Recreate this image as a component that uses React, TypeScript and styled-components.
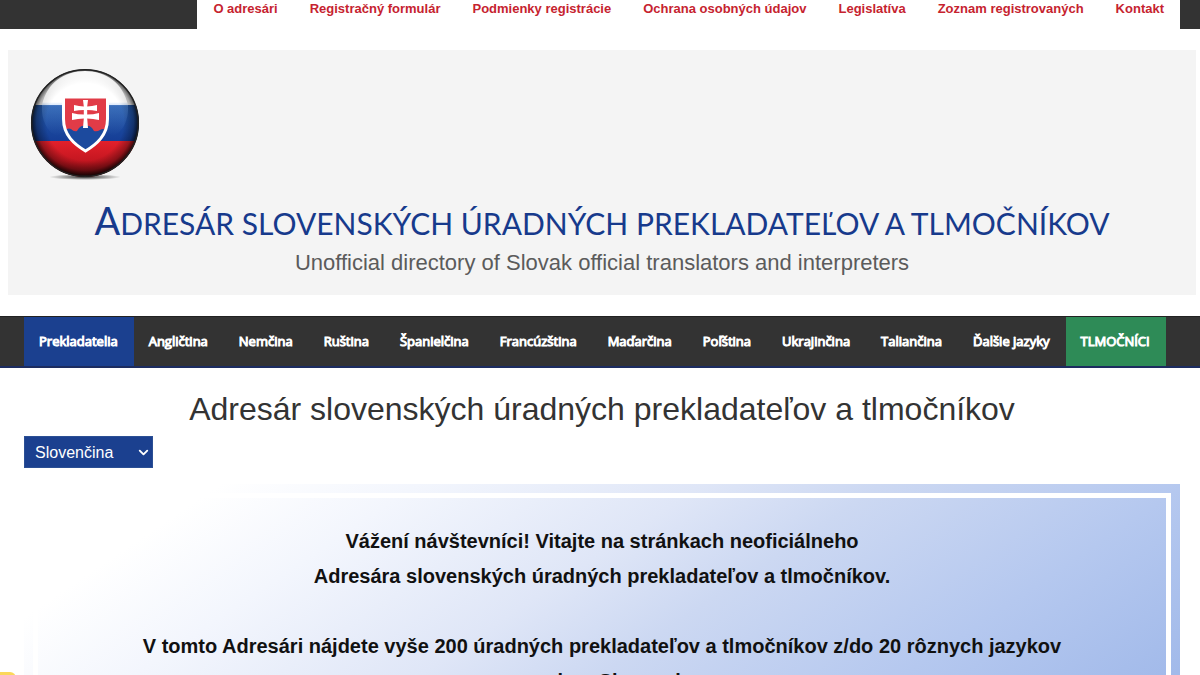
import React from "react";
import styled, { createGlobalStyle } from "styled-components";
import { ChevronDown } from "lucide-react";

const sans = `"Liberation Sans", Arial, sans-serif`;

const GlobalStyle = createGlobalStyle`
  * { box-sizing: border-box; }
  body { margin: 0; background: #fff; font-family: ${sans}; color: #333; }
  h1, h2, p { margin: 0; font-weight: normal; }
`;

const Page = styled.div`
  height: 100vh;
  overflow: hidden;
  display: flex;
  flex-direction: column;
`;

const TopBar = styled.div`
  flex: none;
  display: flex;
  justify-content: flex-end;
  height: 29px;
  padding-right: 20px;
  background: #333;
`;

const TopNav = styled.nav`
  display: flex;
  background: #fff;
`;

const TopLink = styled.a`
  padding: 1px 16px 0;
  font-size: 13px;
  line-height: 16px;
  font-weight: bold;
  color: #c6232f;
  text-decoration: none;
  white-space: nowrap;
`;

const Banner = styled.header`
  flex: none;
  margin: 21px 4px 0 8px;
  padding: 15px 20px 15px;
  background: #f4f4f4;
  text-align: center;
`;

const LogoLink = styled.a`
  display: block;
  width: 114px;
  height: 116px;
  svg { display: block; }
`;

const SiteTitle = styled.p`
  margin-top: 17px;
  font-family: Lato, ${sans};
  font-size: 30px;
  line-height: 44px;
  text-transform: uppercase;
  color: #173a8c;
  &::first-letter { font-size: 38px; }
`;

const Tagline = styled.p`
  margin-top: 1px;
  font-size: 22px;
  line-height: 34px;
  color: #5b5b5b;
`;

const MainNav = styled.nav`
  flex: none;
  display: flex;
  margin-top: 21px;
  padding: 0 24px;
  background: #333;
  border-top: 1px solid #222;
  border-bottom: 2px solid #1c2c60;
`;

const NavLink = styled.a<{ $fill?: string }>`
  padding: 0 16px 0 15px;
  font-family: "Open Sans", ${sans};
  font-size: 13px;
  line-height: 49px;
  -webkit-text-stroke: 1px #fff;
  color: #fff;
  background: ${(p) => p.$fill ?? "transparent"};
  text-decoration: none;
  white-space: nowrap;
`;

const Main = styled.main`
  flex: 1;
  min-height: 0;
  display: flex;
  flex-direction: column;
  padding: 22px 20px 0 24px;
`;

const Heading = styled.h1`
  font-size: 32px;
  line-height: 38px;
  text-align: center;
`;

const SelectBox = styled.div`
  position: relative;
  align-self: flex-start;
  margin-top: 8px;
  svg {
    position: absolute;
    right: 2px;
    top: 9px;
    pointer-events: none;
  }
`;

const LanguageSelect = styled.select`
  appearance: none;
  display: block;
  width: 129px;
  height: 32px;
  padding: 0 10px;
  border: 1px solid #2b4f94;
  border-radius: 0;
  background: #1b408f;
  color: #fff;
  font-family: ${sans};
  font-size: 16px;
`;

const Panel = styled.section`
  flex: 1;
  min-height: 0;
  display: flex;
  margin-top: 16px;
  padding: 9px 9px 0;
  background: linear-gradient(146deg, #fff 110px, #f3f6fd 220px, #dfe6f7 380px, #ccd8f2 480px, #b5c8ef 650px, #a2baea 800px);
`;

const PanelFrame = styled.div`
  flex: 1;
  border: 5px solid #fff;
  border-bottom: 0;
  padding: 26px 20px 0;
`;

const Intro = styled.p`
  font-size: 20px;
  line-height: 35px;
  font-weight: bold;
  text-align: center;
  color: #111;
`;

const CornerButton = styled.button`
  position: fixed;
  left: -30px;
  bottom: -42px;
  width: 46px;
  height: 45px;
  padding: 0;
  border: 0;
  border-radius: 6px;
  background: #fbd75b;
`;

const topLinks = [
  "O adresári",
  "Registračný formulár",
  "Podmienky registrácie",
  "Ochrana osobných údajov",
  "Legislatíva",
  "Zoznam registrovaných",
  "Kontakt",
];

const navLinks: { label: string; fill?: string }[] = [
  { label: "Prekladatelia", fill: "#1b408f" },
  { label: "Angličtina" },
  { label: "Nemčina" },
  { label: "Ruština" },
  { label: "Španielčina" },
  { label: "Francúzština" },
  { label: "Maďarčina" },
  { label: "Poľština" },
  { label: "Ukrajinčina" },
  { label: "Taliančina" },
  { label: "Ďalšie jazyky" },
  { label: "TLMOČNÍCI", fill: "#2e8b57" },
];

const SHIELD = "M35.500 32H79.500V54C79.500 70 69 79 57.500 86C46 79 35.500 70 35.500 54Z";

function FlagBadge() {
  return (
    <svg width="114" height="116" viewBox="0 0 114 116" aria-hidden="true">
      <defs>
        <clipPath id="ball"><circle cx="57" cy="58" r="54" /></clipPath>
        <clipPath id="shield"><path d={SHIELD} /></clipPath>
        <linearGradient id="white" x1="0" y1="0" x2="0" y2="1">
          <stop offset="0" stopColor="#eee" /><stop offset=".4" stopColor="#fff" />
        </linearGradient>
        <linearGradient id="blue" x1="0" y1="0" x2="0" y2="1">
          <stop offset="0" stopColor="#2459a8" /><stop offset="1" stopColor="#153d96" />
        </linearGradient>
        <linearGradient id="red" x1="0" y1="0" x2="0" y2="1">
          <stop offset="0" stopColor="#e3202b" /><stop offset=".5" stopColor="#c41620" /><stop offset="1" stopColor="#5c0a0e" />
        </linearGradient>
        <radialGradient id="shade" cx=".5" cy=".49" r=".51">
          <stop offset=".7" stopColor="#000" stopOpacity="0" />
          <stop offset=".88" stopColor="#000" stopOpacity=".32" />
          <stop offset="1" stopColor="#000" stopOpacity=".9" />
        </radialGradient>
        <linearGradient id="gloss" x1="0" y1="0" x2="0" y2="1">
          <stop offset="0" stopColor="#fff" stopOpacity=".95" />
          <stop offset=".48" stopColor="#fff" stopOpacity=".6" />
          <stop offset=".54" stopColor="#7fb0f0" stopOpacity=".25" />
          <stop offset="1" stopColor="#7fb0f0" stopOpacity="0" />
        </linearGradient>
        <radialGradient id="ground">
          <stop offset="0" stopColor="#000" stopOpacity=".8" />
          <stop offset="1" stopColor="#000" stopOpacity="0" />
        </radialGradient>
      </defs>
      <ellipse cx="57" cy="112" rx="36" ry="3" fill="url(#ground)" />
      <g clipPath="url(#ball)">
        <rect width="114" height="41" fill="url(#white)" />
        <rect y="40" width="114" height="37" fill="url(#blue)" />
        <rect y="76" width="114" height="40" fill="url(#red)" />
        <circle cx="57" cy="58" r="54" fill="url(#shade)" />
        <path d="M14 40C19 18 36 6 57 6S95 18 100 40C101 55 95 66 86 71C68 62 46 62 28 71C19 66 13 55 14 40Z" fill="url(#gloss)" />
      </g>
      <circle cx="57" cy="58" r="53.300" fill="none" stroke="#222" strokeWidth="1.500" />
      <path d={SHIELD} fill="#e13b47" />
      <g clipPath="url(#shield)">
        <path d="M34 88V68Q39 62 43 64Q46 67 49 66Q52 60 57.500 61Q63 60 66 66Q69 67 72 65Q76 62 81 68V88Z" fill="#1c4a9e" />
      </g>
      <path d={SHIELD} fill="none" stroke="#fff" strokeWidth="3" />
      <path d="M55 35H60L59.200 41.500Q64 41 69 40V46Q64 45 59.200 45V49.500Q65 49.500 71 48V55Q65 53.500 59.200 53.500L60 63H55L55.800 53.500Q50 53.500 44 55V48Q50 49.500 55.800 49.500V45Q51 45 46 46V40Q51 41 55.800 41.500Z" fill="#fff" />
    </svg>
  );
}

export default function App() {
  return (
    <>
      <GlobalStyle />
      <Page>
        <TopBar>
          <TopNav aria-label="Informácie">
            {topLinks.map((label) => (
              <TopLink key={label} href="#">{label}</TopLink>
            ))}
          </TopNav>
        </TopBar>
        <Banner>
          <LogoLink href="#" aria-label="Slovensko"><FlagBadge /></LogoLink>
          <SiteTitle>Adresár slovenských úradných prekladateľov a tlmočníkov</SiteTitle>
          <Tagline>Unofficial directory of Slovak official translators and interpreters</Tagline>
        </Banner>
        <MainNav aria-label="Jazyky">
          {navLinks.map(({ label, fill }) => (
            <NavLink key={label} href="#" $fill={fill}>{label}</NavLink>
          ))}
        </MainNav>
        <Main>
          <Heading>Adresár slovenských úradných prekladateľov a tlmočníkov</Heading>
          <SelectBox>
            <LanguageSelect aria-label="Jazyk" defaultValue="sk">
              <option value="sk">Slovenčina</option>
            </LanguageSelect>
            <ChevronDown size={15} color="#fff" strokeWidth={3} />
          </SelectBox>
          <Panel>
            <PanelFrame>
              <Intro>
                Vážení návštevníci! Vitajte na stránkach neoficiálneho
                <br />
                Adresára slovenských úradných prekladateľov a tlmočníkov.
              </Intro>
              <Intro>
                <br />
                V tomto Adresári nájdete vyše 200 úradných prekladateľov a tlmočníkov z/do 20 rôznych jazykov
                <br />
                po celom Slovensku
              </Intro>
            </PanelFrame>
          </Panel>
        </Main>
        <CornerButton aria-label="Nastavenia" />
      </Page>
    </>
  );
}
